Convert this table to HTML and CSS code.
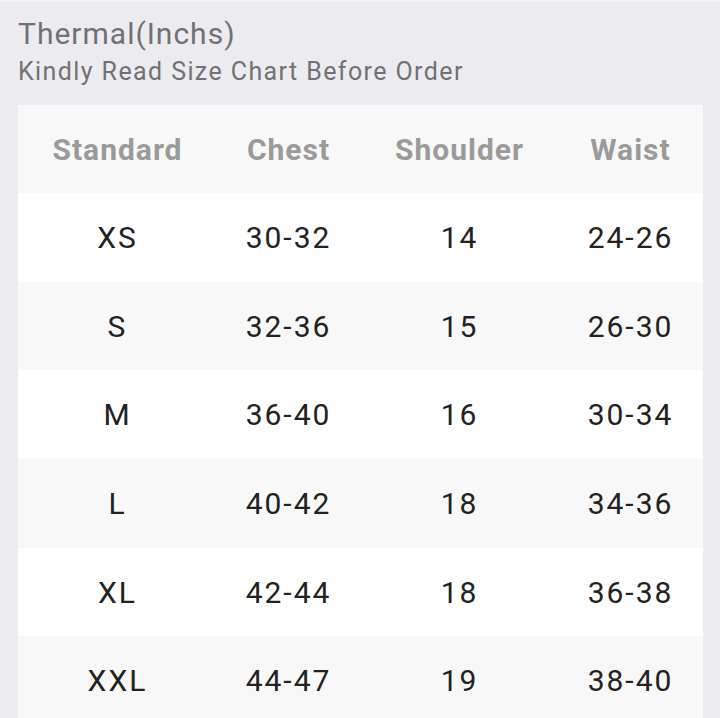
FILE: index.html
```html
<!DOCTYPE html>
<html>
<head>
<meta charset="utf-8">
<link rel="stylesheet" href="styles.css">
</head>
<body>
<div class="page">
  <div class="heading">
    <div class="title">Thermal(Inchs)</div>
    <div class="subtitle">Kindly Read Size Chart Before Order</div>
  </div>
  <div class="table">
    <div class="row head"><span>Standard</span><span>Chest</span><span>Shoulder</span><span>Waist</span></div>
    <div class="row"><span>XS</span><span>30-32</span><span>14</span><span>24-26</span></div>
    <div class="row alt"><span>S</span><span>32-36</span><span>15</span><span>26-30</span></div>
    <div class="row"><span>M</span><span>36-40</span><span>16</span><span>30-34</span></div>
    <div class="row alt"><span>L</span><span>40-42</span><span>18</span><span>34-36</span></div>
    <div class="row"><span>XL</span><span>42-44</span><span>18</span><span>36-38</span></div>
    <div class="row alt"><span>XXL</span><span>44-47</span><span>19</span><span>38-40</span></div>
  </div>
</div>
</body>
</html>
```
FILE: styles.css
```css
html, body {
  margin: 0;
  padding: 0;
  height: 100%;
  overflow: hidden;
}
body {
  background: #ececf0;
  font-family: Roboto, "Noto Sans", sans-serif;
}
.page {
  border-top: 2px solid #f4f4f7;
  padding: 0 17px 0 18px;
}
.heading {
  padding-top: 14px;
  height: 103px;
  box-sizing: border-box;
}
.title {
  font-size: 30px;
  line-height: 36px;
  letter-spacing: 1px;
  color: #707174;
}
.subtitle {
  margin-top: 4px;
  font-size: 25px;
  line-height: 32px;
  letter-spacing: 1.4px;
  color: #707174;
}
.table {
  background: #ffffff;
  overflow: hidden;
}
.row {
  display: grid;
  grid-template-columns: repeat(4, 171px);
  padding-left: 14px;
  height: 88.7px;
  align-items: center;
  justify-items: center;
  font-size: 30px;
  letter-spacing: 2px;
  color: #222222;
  background: #ffffff;
}
.row.alt, .row.head {
  background: #f8f8f8;
}
.row.head {
  height: 88px;
  color: #9a9a9a;
  font-weight: 700;
  letter-spacing: 1px;
}
```
